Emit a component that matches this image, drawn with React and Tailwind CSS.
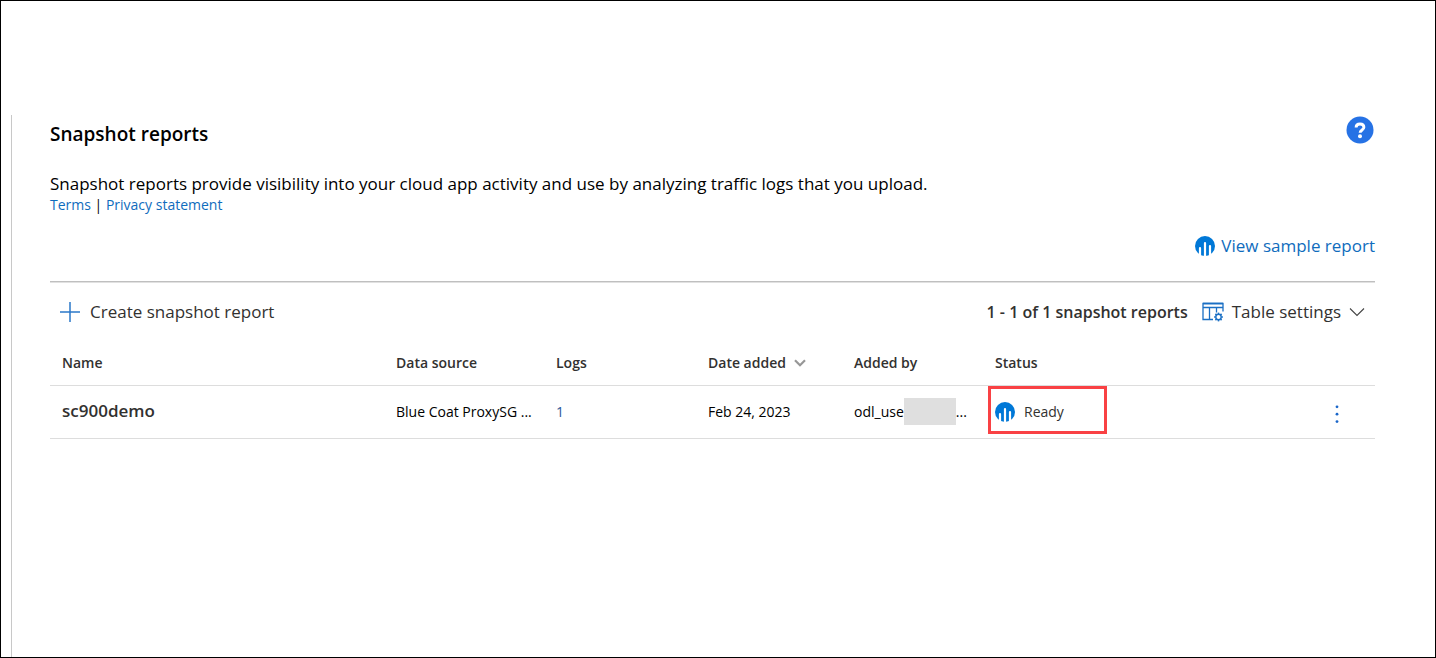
function ChartBadge() {
  return (
    <svg viewBox="0 0 20 20" className="size-5 shrink-0" aria-hidden="true">
      <circle cx="10" cy="10" r="10" fill="#0078d7" />
      <path d="M5 20V12.2M10 20V7.2M15 20V10" stroke="#fff" strokeWidth="2.2" strokeLinecap="round" />
    </svg>
  );
}

function HelpIcon() {
  return (
    <svg viewBox="0 0 28 28" className="size-7" fill="none" aria-hidden="true">
      <circle cx="14" cy="14" r="13.5" fill="#2672e5" />
      <path d="M10.1 11.4C10.1 9.2 11.8 8 14 8s3.9 1.2 3.9 3.3c0 2.7-3.8 2.7-3.8 5.5" stroke="#fff" strokeWidth="2.9" />
      <circle cx="14" cy="20.2" r="2" fill="#fff" />
    </svg>
  );
}

function PlusIcon() {
  return (
    <svg viewBox="0 0 20 20" className="size-5" fill="none" aria-hidden="true">
      <path d="M10 0v20M0 10h20" stroke="#2b78c9" strokeWidth="1.5" />
    </svg>
  );
}

function TableSettingsIcon() {
  const teeth = [0, 45, 90, 135, 180, 225, 270, 315];
  return (
    <svg viewBox="0 0 22 20" className="h-5 w-[22px]" fill="none" stroke="#1a6fc4" aria-hidden="true">
      <path d="M11 17.5H1V1.5h20v8M1 5.5h20M7.5 5.5v12M14.5 5.5v5" strokeWidth="1.3" />
      <path d="M1 1.5h20" strokeWidth="1.6" />
      <circle cx="16.5" cy="15" r="2.7" strokeWidth="1.4" />
      {teeth.map((angle) => (
        <path key={angle} d="M16.5 12V10.6" strokeWidth="1.5" transform={`rotate(${angle} 16.5 15)`} />
      ))}
    </svg>
  );
}

function ChevronIcon() {
  return (
    <svg viewBox="0 0 16 10" className="h-[10px] w-4" fill="none" aria-hidden="true">
      <path d="M1 1.5l7 7 7-7" stroke="#444" strokeWidth="1.1" />
    </svg>
  );
}

function SortIcon() {
  return (
    <svg viewBox="0 0 12 8" className="h-2 w-3" fill="none" aria-hidden="true">
      <path d="M1 1.2l5 5 5-5" stroke="#979797" strokeWidth="2.2" />
    </svg>
  );
}

function MoreIcon() {
  return (
    <svg viewBox="0 0 4 18" className="h-[18px] w-1" fill="#1a66c9" aria-hidden="true">
      <circle cx="2" cy="1.8" r="1.4" />
      <circle cx="2" cy="9.2" r="1.4" />
      <circle cx="2" cy="16.6" r="1.4" />
    </svg>
  );
}

const reports = [
  { name: "sc900demo", source: "Blue Coat ProxySG ...", logs: 1, date: "Feb 24, 2023", addedBy: "odl_use", status: "Ready" },
];

export default function App() {
  return (
    <div className="flex min-h-screen flex-col border border-black bg-white pt-[114px] pl-[10px] font-['Open_Sans','Noto_Sans',sans-serif] text-[#323130]">
      <main className="flex-1 border-l border-[#c8c8c8] pr-[60px] pl-[38px]">
        <header className="flex items-start justify-between">
          <h1 className="pt-[5px] text-[19px] leading-7 font-semibold text-black">Snapshot reports</h1>
          <button type="button" aria-label="Help" className="mt-px mr-px">
            <HelpIcon />
          </button>
        </header>

        <p className="mt-6 text-[17px] leading-6 text-black">
          Snapshot reports provide visibility into your cloud app activity and use by analyzing traffic logs that you upload.
        </p>
        <p className="text-sm leading-[18px] text-black">
          <a href="#terms" className="text-[#0f6cbd]">Terms</a> | <a href="#privacy" className="text-[#0f6cbd]">Privacy statement</a>
        </p>

        <div className="mt-5 flex justify-end">
          <a href="#sample" className="flex items-center gap-[6px] text-[17px] leading-6 text-[#0f6cbd]">
            <ChartBadge />
            View sample report
          </a>
        </div>

        <div className="mt-[23px] flex h-[59px] items-center justify-between border-t border-[#bfbfbf] px-[10px] pt-px text-[17px] leading-6 inset-shadow-[0_1px_#e1e1e1]">
          <button type="button" className="flex items-center gap-[10px]">
            <PlusIcon />
            Create snapshot report
          </button>
          <div className="flex items-center gap-[14px]">
            <span className="text-base font-semibold">1 - 1 of 1 snapshot reports</span>
            <button type="button" className="flex items-center gap-2">
              <TableSettingsIcon />
              Table settings
              <ChevronIcon />
            </button>
          </div>
        </div>

        <table className="w-full table-fixed text-left text-sm leading-5">
          <colgroup>
            <col />
            <col className="w-[160px]" />
            <col className="w-[152px]" />
            <col className="w-[146px]" />
            <col className="w-[141px]" />
            <col className="w-[316px]" />
            <col className="w-[76px]" />
          </colgroup>
          <thead>
            <tr className="h-[45px] border-b border-[#dddddd] [&>th]:px-3 [&>th]:pt-px [&>th]:font-semibold">
              <th scope="col">Name</th>
              <th scope="col">Data source</th>
              <th scope="col">Logs</th>
              <th scope="col" aria-sort="descending">
                <button type="button" className="flex items-center gap-2">
                  Date added
                  <SortIcon />
                </button>
              </th>
              <th scope="col">Added by</th>
              <th scope="col">Status</th>
              <th scope="col" aria-label="Actions" />
            </tr>
          </thead>
          <tbody>
            {reports.map((report) => (
              <tr key={report.name} className="h-[53px] border-b border-[#dddddd] text-black [&>td]:px-3">
                <th scope="row" className="px-3 pb-[2px] text-[17px] font-semibold text-[#323130]">{report.name}</th>
                <td className="whitespace-nowrap">{report.source}</td>
                <td className="text-[#2b579a]">{report.logs}</td>
                <td className="whitespace-nowrap">{report.date}</td>
                <td>
                  <div className="flex items-center">
                    {report.addedBy}
                    <span className="h-[27px] w-[52px] bg-[#dfdfdf]" />
                    ...
                  </div>
                </td>
                <td className="px-[5px]! align-top">
                  <div className="flex h-12 w-[119px] items-center gap-[9px] border-3 border-[#f94144] pt-1 pl-1 text-[#323130]">
                    <ChartBadge />
                    {report.status}
                  </div>
                </td>
                <td>
                  <button type="button" aria-label="More actions" className="flex w-full justify-center pt-1">
                    <MoreIcon />
                  </button>
                </td>
              </tr>
            ))}
          </tbody>
        </table>
      </main>
    </div>
  );
}
